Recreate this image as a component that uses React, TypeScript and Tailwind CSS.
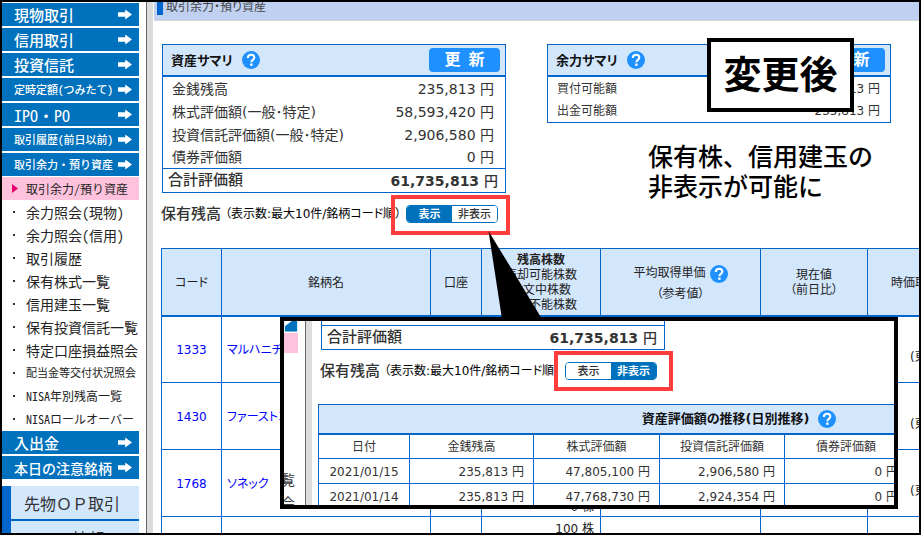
import { ReactNode, useState } from "react";
import clsx from "clsx";

const menu = [
  { label: "現物取引", size: "text-[15px] font-medium" },
  { label: "信用取引", size: "text-[15px] font-medium" },
  { label: "投資信託", size: "text-[15px] font-medium" },
  { label: "定時定額(つみたて)", size: "text-[11px] font-medium" },
  { label: "IPO・PO", size: "text-[16px]" },
  { label: "取引履歴(前日以前)", size: "text-[11px] font-medium" },
  { label: "取引余力・預り資産", size: "text-[11px] font-medium" },
];

const subMenu = [
  { label: "余力照会(現物)", size: "text-[14px]" },
  { label: "余力照会(信用)", size: "text-[14px]" },
  { label: "取引履歴", size: "text-[14px]" },
  { label: "保有株式一覧", size: "text-[14px]" },
  { label: "信用建玉一覧", size: "text-[14px]" },
  { label: "保有投資信託一覧", size: "text-[14px]" },
  { label: "特定口座損益照会", size: "text-[14px]" },
  { label: "配当金等交付状況照会", size: "text-[11px]" },
  { label: "NISA年別残高一覧", size: "text-[12px]" },
  { label: "NISAロールオーバー", size: "text-[12px]" },
];

const bottomMenu = [
  { label: "入出金", size: "text-[15px] font-medium" },
  { label: "本日の注意銘柄", size: "text-[14px] font-medium" },
];

const assets = [
  ["金銭残高", "235,813"],
  ["株式評価額(一般･特定)", "58,593,420"],
  ["投資信託評価額(一般･特定)", "2,906,580"],
  ["債券評価額", "0"],
];

const stocks = [
  { code: "1333", name: "マルハニチロ" },
  { code: "1430", name: "ファーストコーポ" },
  { code: "1768", name: "ソネック" },
  { code: "", name: "" },
];

const history = [
  ["2021/01/15", "235,813", "47,805,100", "2,906,580", "0"],
  ["2021/01/14", "235,813", "47,768,730", "2,924,354", "0"],
];

const Arrow = () => (
  <svg viewBox="0 0 14 11" className="w-[14px] h-[11px] shrink-0" fill="#fff">
    <path d="M0 3.2H7.2V0.5L14 5.5L7.2 10.5V7.8H0Z" />
  </svg>
);

const MenuButton = ({ label, size }: { label: string; size: string }) => (
  <a
    href="#"
    className="flex h-[23px] items-center justify-between bg-[#0071bc] pl-[12px] pr-[7px] text-white"
  >
    <span className={clsx("whitespace-nowrap leading-none", size)}>{label}</span>
    <Arrow />
  </a>
);

const Help = () => (
  <button
    aria-label="ヘルプ"
    className="inline-flex size-[18px] shrink-0 items-center justify-center rounded-full bg-[#1e90ff] align-middle text-white"
  >
    <svg viewBox="0 0 18 18" className="size-[18px]" fill="none">
      <path
        d="M5.8 6.9C5.8 4.9 7.2 3.8 9.1 3.8C11 3.8 12.3 4.9 12.3 6.6C12.3 8.8 9.4 8.9 9.4 11.3"
        stroke="#fff"
        strokeWidth="2.1"
      />
      <rect x="8.2" y="12.5" width="2.4" height="2.3" fill="#fff" />
    </svg>
  </button>
);

const Toggle = ({ initial, frame }: { initial: boolean; frame: string }) => {
  const [visible, setVisible] = useState<boolean>(initial);
  const on = "bg-[#0071bc] text-white font-bold";
  const off = "bg-white text-[#333] font-medium";

  return (
    <div className="relative shrink-0">
      <div className="flex h-[18px] w-[92px] overflow-hidden rounded-[4px] border border-[#0071bc] text-[11px] leading-none">
        <button className={clsx("flex-1", visible ? on : off)} onClick={() => setVisible(true)}>
          表示
        </button>
        <button className={clsx("flex-1", visible ? off : on)} onClick={() => setVisible(false)}>
          非表示
        </button>
      </div>
      <div className={clsx("pointer-events-none absolute border-4 border-[#ff3d3d]", frame)} />
    </div>
  );
};

const BalanceHeading = ({ initial, frame }: { initial: boolean; frame: string }) => (
  <div className="flex h-[18px] items-center whitespace-nowrap">
    <h2 className="text-[15px] font-medium leading-none text-[#333]">保有残高</h2>
    <p className="mr-[5px] w-[180px] pl-[4px] text-[12px] leading-none text-black">
      （表示数:最大10件/銘柄コード順）
    </p>
    <Toggle initial={initial} frame={frame} />
  </div>
);

const Summary = ({ title, children }: { title: string; children: ReactNode }) => (
  <section className="min-w-0 flex-1 border border-[#0066cc] bg-white text-[#333]">
    <div className="flex h-[32px] items-center border-b-2 border-[#0066cc] bg-[#d2e6fc] pl-[8px] pr-[5px]">
      <h2 className="mr-[9px] text-[13px] font-bold leading-none text-[#111]">{title}</h2>
      <Help />
      <button className="ml-auto h-[24px] w-[71px] rounded-[4px] bg-[#1e90ff] text-[16px] font-bold leading-none text-white">
        更&ensp;新
      </button>
    </div>
    {children}
  </section>
);

const Total = () => (
  <div className="flex h-[24px] items-center justify-between border-t border-[#0066cc] pl-[5px] pr-[7px] text-[#333]">
    <span className="text-[15px] font-medium leading-none">合計評価額</span>
    <span className="text-[14px] font-bold leading-none">
      61,735,813 <span className="font-medium">円</span>
    </span>
  </div>
);

const th = "border border-[#0066cc] border-b-2 p-0 pt-[3px] font-normal";
const td = "border border-[#0066cc] p-0 pt-[3px]";

const StockTable = () => (
  <table className="w-[833px] table-fixed border-collapse text-[12px] leading-[15px] text-[#222]">
    <colgroup>
      <col className="w-[60px]" />
      <col className="w-[209px]" />
      <col className="w-[51px]" />
      <col className="w-[119px]" />
      <col className="w-[160px]" />
      <col className="w-[107px]" />
      <col className="w-[127px]" />
    </colgroup>
    <thead>
      <tr className="h-[67px] bg-[#d2e6fc]">
        <th className={th}>コード</th>
        <th className={th}>銘柄名</th>
        <th className={th}>口座</th>
        <th className={th}>
          <b>残高株数</b>
          <br />
          売却可能株数
          <br />
          注文中株数
          <br />
          売却不能株数
        </th>
        <th className={th}>
          <div className="flex items-center justify-center gap-[4px] pb-[4px]">
            平均取得単価 <Help />
          </div>
          （参考値）
        </th>
        <th className={th}>
          現在値
          <br />
          （前日比）
        </th>
        <th className={clsx(th, "pr-[8px]")}>時価取得総額</th>
      </tr>
    </thead>
    <tbody>
      {stocks.map((el, i) => (
        <tr key={i} className="h-[67px]">
          <td className={clsx(td, "text-center text-[#0000ff]")}>
            <a href="#">{el.code}</a>
          </td>
          <td className={clsx(td, "overflow-hidden whitespace-nowrap pl-[5px] text-[#0000ff]")}>
            <a href="#">{el.name}</a>
          </td>
          <td className={td} />
          <td className={clsx(td, "pr-[6px] text-right")}>
            100 株
            <br />
            100 株
            <br />
            0 株
            <br />0 株
          </td>
          <td className={td} />
          <td className={td} />
          <td className="border border-[#0066cc] p-0 pl-[42px] pt-[16px]">{el.code && "(東証)"}</td>
        </tr>
      ))}
    </tbody>
  </table>
);

const HistoryTable = () => (
  <table className="w-[841px] table-fixed border-collapse text-[13px] leading-[15px] text-[#333]">
    <colgroup>
      <col className="w-[91px]" />
      <col className="w-[124px]" />
      <col className="w-[126px]" />
      <col className="w-[125px]" />
      <col className="w-[123px]" />
      <col className="w-[126px]" />
      <col className="w-[126px]" />
    </colgroup>
    <thead>
      <tr className="h-[29px] bg-[#d2e6fc] text-[#111]">
        <th colSpan={7} className="border border-b-2 border-[#0066cc] p-0">
          <div className="flex items-center justify-center gap-[9px]">
            資産評価額の推移(日別推移) <Help />
          </div>
        </th>
      </tr>
      <tr className="h-[25px] text-[12px]">
        {["日付", "金銭残高", "株式評価額", "投資信託評価額", "債券評価額", "", ""].map((el, i) => (
          <th key={i} className={clsx(td, "font-normal")}>
            {el}
          </th>
        ))}
      </tr>
    </thead>
    <tbody>
      {history.map(([date, ...values]) => (
        <tr key={date} className="h-[25px] text-[12px]">
          <td className={clsx(td, "text-center")}>{date}</td>
          {values.map((el, i) => (
            <td key={i} className={clsx(td, "pr-[9px] text-right")}>
              {el} 円
            </td>
          ))}
          <td className={td} />
          <td className={td} />
        </tr>
      ))}
    </tbody>
  </table>
);

const Sidebar = () => (
  <nav className="w-[144px] shrink-0 pr-[7px] pt-px [font-family:'Noto_Sans_CJK_JP',sans-serif] [font-feature-settings:'hwid']">
    <div className="flex flex-col gap-[2px]">
      {menu.map((el) => (
        <MenuButton key={el.label} {...el} />
      ))}
    </div>
    <ul className="my-px text-[#222]">
      <li className="flex h-[23px] items-center bg-[#ffc2dd]">
        <svg viewBox="0 0 6 9" className="ml-[10px] mr-[8px] h-[9px] w-[6px]" fill="#e4006f">
          <path d="M0 0L6 4.5L0 9Z" />
        </svg>
        <a href="#" className="whitespace-nowrap text-[12px] leading-none">
          取引余力/預り資産
        </a>
      </li>
      {subMenu.map((el) => (
        <li key={el.label} className="flex h-[23px] items-center">
          <span className="ml-[11px] mr-[11px] size-[2px] shrink-0 bg-[#333]" />
          <a href="#" className={clsx("whitespace-nowrap leading-none", el.size)}>
            {el.label}
          </a>
        </li>
      ))}
    </ul>
    <div className="flex flex-col gap-[2px]">
      {bottomMenu.map((el) => (
        <MenuButton key={el.label} {...el} />
      ))}
    </div>
    <div className="mt-[7px] border-l-[9px] border-[#0066cc] text-[16px] leading-none text-[#333] [font-feature-settings:normal]">
      {["先物ＯＰ取引", "QUICK情報"].map((el) => (
        <a
          key={el}
          href="#"
          className="flex h-[35px] items-center whitespace-nowrap border-b-2 border-[#0066cc] bg-[#d2e6fc] pl-[13px]"
        >
          {el}
        </a>
      ))}
    </div>
  </nav>
);

const Callout = () => (
  <div className="absolute left-[278px] right-[21px] top-[315px] flex h-[192px] overflow-hidden border-4 border-black bg-white">
    <div className="flex w-[21px] shrink-0 flex-col items-start text-[14px] leading-none text-[#333]">
      <svg viewBox="0 0 14 12" className="h-[12px] w-[14px]">
        <rect width="14" height="12" fill="#0071bc" />
        <path d="M0 0H8L0 6Z" fill="#fff" />
      </svg>
      <div className="mt-px h-[23px] w-[14px] bg-[#ffc2dd]" />
      <div className="mt-[120px] flex w-[11px] flex-col items-end gap-[9px] overflow-hidden">
        <span>覧</span>
        <span>会</span>
      </div>
    </div>
    <div className="w-[7px] shrink-0 border-l border-[#666] bg-[#dcdcdc]" />
    <div className="min-w-0 flex-1 pl-[6px]">
      <div className="ml-[3px] w-[344px] border border-t-0 border-[#0066cc] pt-[4px]">
        <Total />
      </div>
      <div className="mb-[24px] ml-[2px] mt-[12px]">
        <BalanceHeading initial={false} frame="-left-[11px] -right-[16px] -top-[11px] -bottom-[11px]" />
      </div>
      <HistoryTable />
    </div>
  </div>
);

const App = () => {
  return (
    <div className="relative flex h-screen w-full overflow-hidden border-2 border-black bg-white [font-family:'DejaVu_Sans','Noto_Sans_CJK_JP',sans-serif] [font-feature-settings:'palt']">
      <Sidebar />
      <div className="w-[7px] shrink-0 border-l border-[#666] bg-[#dcdcdc]" />
      <main className="min-w-0 flex-1">
        <header className="ml-px flex h-[19px] items-start border-b border-[#d4d4d4] bg-[#bfd0f0] pl-[3px]">
          <span className="mr-[3px] h-[13px] w-[6px] bg-[#0066cc]" />
          <h1 className="text-[12px] leading-[10px] text-[#444]">取引余力・預り資産</h1>
        </header>
        <div className="pl-[8px] pt-[23px]">
          <div className="ml-px mr-[28px] flex items-start gap-[41px]">
            <Summary title="資産サマリ">
              <table className="w-full text-[14px] leading-none">
                <tbody>
                  {assets.map(([label, value]) => (
                    <tr key={label} className="h-[23px] last:h-[22px]">
                      <td className="p-0 pl-[9px]">{label}</td>
                      <td className="p-0 pr-[11px] text-right">{value} 円</td>
                    </tr>
                  ))}
                </tbody>
              </table>
              <Total />
            </Summary>
            <Summary title="余力サマリ">
              <table className="w-full text-[12px] leading-none">
                <tbody>
                  {["買付可能額", "出金可能額"].map((label) => (
                    <tr key={label} className="h-[23px] last:h-[22px]">
                      <td className="p-0 pl-[9px]">{label}</td>
                      <td className="p-0 pr-[10px] text-right">235,813 円</td>
                    </tr>
                  ))}
                </tbody>
              </table>
            </Summary>
          </div>
          <div className="mb-[25px] mt-[12px]">
            <BalanceHeading initial={true} frame="-left-[15px] -right-[12px] -top-[10px] -bottom-[12px]" />
          </div>
          <StockTable />
        </div>
      </main>

      {/* speech-bubble tail */}
      <svg
        viewBox="0 0 54 88"
        className="pointer-events-none absolute left-[486px] top-[229px] h-[88px] w-[54px]"
      >
        <path d="M0.5 0L14 88H54Z" fill="#000" />
      </svg>
      <Callout />

      <div className="absolute right-[65px] top-[36px] flex h-[74px] w-[147px] items-center justify-center border-4 border-black bg-white text-[38px] font-bold leading-none text-black [font-feature-settings:normal]">
        変更後
      </div>
      <p className="absolute right-[46px] top-[141px] text-[25px] font-medium leading-[30px] text-black [font-feature-settings:normal]">
        保有株、信用建玉の
        <br />
        非表示が可能に
      </p>
    </div>
  );
};

export default App;
